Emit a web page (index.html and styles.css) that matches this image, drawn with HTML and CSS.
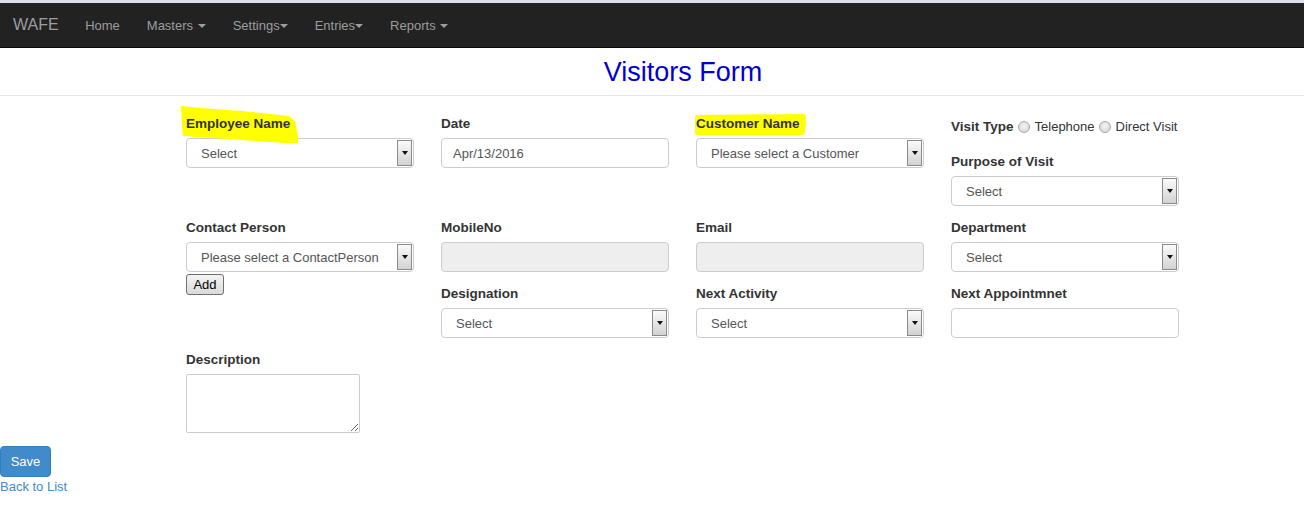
FILE: index.html
```html
<!DOCTYPE html>
<html lang="en">
<head>
  <meta charset="UTF-8" />
  <title>Visitors Form</title>
  <link rel="stylesheet" href="styles.css">
</head>
<body>
  <nav class="navbar">
    <a class="brand" href="#">WAFE</a>
    <ul class="nav">
      <li><a href="#">Home</a></li>
      <li><a href="#">Masters <span class="caret"></span></a></li>
      <li><a href="#">Settings<span class="caret tight"></span></a></li>
      <li><a href="#">Entries<span class="caret tight"></span></a></li>
      <li><a href="#">Reports <span class="caret"></span></a></li>
    </ul>
  </nav>

  <h2 class="title">Visitors Form</h2>
  <hr class="divider">

  <form class="visit-form">
    <!-- row 1 -->
    <div class="cell">
      <div class="group">
        <label class="mark">
          <svg class="mark-emp" width="124" height="40" viewBox="0 0 124 40"><polygon points="0,0 20,2 60,5 108,10 114,15 117,30 117,37 104,37 60,34 2,30 1,20" fill="#ffff00"/></svg>
          <span>Employee Name</span>
        </label>
        <div class="select"><span>Select</span><i class="arrow"></i></div>
      </div>
    </div>
    <div class="cell">
      <div class="group">
        <label>Date</label>
        <div class="input date">Apr/13/2016</div>
      </div>
    </div>
    <div class="cell">
      <div class="group">
        <label class="mark">
          <svg class="mark-cust" width="112" height="22" viewBox="0 0 112 22"><path d="M2 1 L108 0 Q111 0 111 4 L110 18 Q110 21 106 21 L1 21 Q0 21 0 17 L0 4 Q0 1 2 1 Z" fill="#ffff00"/></svg>
          <span>Customer Name</span>
        </label>
        <div class="select"><span>Please select a Customer</span><i class="arrow"></i></div>
      </div>
    </div>
    <div class="cell">
      <div class="visit-type">
        <b>Visit Type</b>
        <span class="radio"></span>Telephone
        <span class="radio"></span>Direct Visit
      </div>
      <div class="group">
        <label>Purpose of Visit</label>
        <div class="select"><span>Select</span><i class="arrow"></i></div>
      </div>
    </div>

    <!-- row 2 -->
    <div class="cell">
      <div class="group">
        <label>Contact Person</label>
        <div class="select"><span>Please select a ContactPerson</span><i class="arrow"></i></div>
        <button type="button" class="add-btn">Add</button>
      </div>
    </div>
    <div class="cell">
      <div class="group">
        <label>MobileNo</label>
        <div class="input disabled"></div>
      </div>
      <div class="group">
        <label>Designation</label>
        <div class="select"><span>Select</span><i class="arrow"></i></div>
      </div>
    </div>
    <div class="cell">
      <div class="group">
        <label>Email</label>
        <div class="input disabled"></div>
      </div>
      <div class="group">
        <label>Next Activity</label>
        <div class="select"><span>Select</span><i class="arrow"></i></div>
      </div>
    </div>
    <div class="cell">
      <div class="group">
        <label>Department</label>
        <div class="select"><span>Select</span><i class="arrow"></i></div>
      </div>
      <div class="group">
        <label>Next Appointmnet</label>
        <div class="input"></div>
      </div>
    </div>

    <!-- row 3 -->
    <div class="cell">
      <div class="group">
        <label>Description</label>
        <textarea class="desc"></textarea>
      </div>
    </div>
  </form>

  <div class="actions">
    <button type="button" class="save-btn">Save</button>
    <a class="back" href="#">Back to List</a>
  </div>
</body>
</html>
```

FILE: styles.css
```css
* {
  box-sizing: border-box;
}

body {
  margin: 0;
  border-top: 3px solid #dbe1ea;
  font-family: 'Liberation Sans', Arial, sans-serif;
  font-size: 13px;
  color: #333;
  background: #fff;
}

a {
  text-decoration: none;
}

/* navbar */
.navbar {
  display: flex;
  align-items: center;
  height: 45px;
  background: #222;
  border-bottom: 1px solid #080808;
}

.brand {
  padding: 0 13px 0 13px;
  font-size: 16px;
  color: #9d9d9d;
}

.nav {
  display: flex;
  margin: 0;
  padding: 0;
  list-style: none;
}

.nav a {
  display: block;
  padding: 0 13.5px;
  font-size: 13px;
  color: #9d9d9d;
}

.caret {
  display: inline-block;
  width: 0;
  height: 0;
  margin-left: 1px;
  vertical-align: middle;
  border-top: 4px solid #9d9d9d;
  border-left: 4px solid transparent;
  border-right: 4px solid transparent;
}

.caret.tight {
  margin-left: 0;
}

/* title */
.title {
  margin: 9px 0 8px;
  padding-left: 62px;
  font-size: 27px;
  line-height: 30px;
  font-weight: normal;
  text-align: center;
  color: #0000cd;
}

.divider {
  margin: 0;
  border: 0;
  border-top: 1px solid #e8e8e8;
}

/* form */
.visit-form {
  display: grid;
  grid-template-columns: repeat(4, 228px);
  column-gap: 27px;
  margin: 18px 0 0 186px;
}

.group {
  margin-bottom: 12px;
}

.group label {
  display: block;
  height: 19px;
  margin-bottom: 5px;
  padding-top: 1px;
  font-size: 13.5px;
  line-height: 18px;
  font-weight: bold;
  color: #333;
}

.mark {
  position: relative;
}

.mark span {
  position: relative;
}

.mark svg {
  position: absolute;
}

.mark-emp {
  left: -5px;
  top: -8px;
}

.mark-cust {
  left: -1px;
  top: 0;
}

.visit-type {
  display: flex;
  align-items: center;
  height: 25px;
  margin-bottom: 13px;
  font-size: 13px;
  color: #333;
}

.visit-type b {
  font-size: 13.5px;
}

.radio {
  display: inline-block;
  width: 12px;
  height: 12px;
  margin: 0 5px 0 4px;
  border: 1px solid #a8a8a8;
  border-radius: 50%;
  background: radial-gradient(circle at 50% 40%, #f6f6f6, #d0d0d0);
}

.select,
.input {
  display: flex;
  align-items: center;
  width: 228px;
  height: 30px;
  border: 1px solid #ccc;
  border-radius: 4px;
  font-size: 13px;
  color: #555;
  background: #fff;
}

.select {
  padding-left: 14px;
}

.select span {
  flex: 1;
  white-space: nowrap;
}

.arrow {
  display: flex;
  align-items: center;
  justify-content: center;
  align-self: stretch;
  width: 15px;
  margin: 1px 1px 1px 0;
  border: 1px solid #8a8a8a;
  background: linear-gradient(#fbfbfb, #d2d2d2);
}

.arrow::after {
  content: '';
  border-top: 4px solid #111;
  border-left: 3px solid transparent;
  border-right: 3px solid transparent;
}

.date {
  padding-left: 11px;
}

.disabled {
  background: #eee;
}

.add-btn {
  display: block;
  width: 38px;
  height: 21px;
  margin-top: 2px;
  padding: 0;
  border: 1px solid #707070;
  border-radius: 3px;
  background: linear-gradient(#f4f4f4, #dadada);
  font-family: inherit;
  font-size: 13px;
  color: #000;
}

.desc {
  display: block;
  width: 174px;
  height: 59px;
  border: 1px solid #ccc;
  border-radius: 2px;
  font-family: inherit;
}

/* bottom actions */
.actions {
  margin-top: 1px;
}

.save-btn {
  display: block;
  width: 51px;
  height: 31px;
  padding: 0;
  border: 1px solid #357ebd;
  border-radius: 4px;
  background: #428bca;
  font-family: inherit;
  font-size: 13px;
  color: #fff;
}

.back {
  display: block;
  line-height: 20px;
  font-size: 13px;
  color: #428bca;
}
```
